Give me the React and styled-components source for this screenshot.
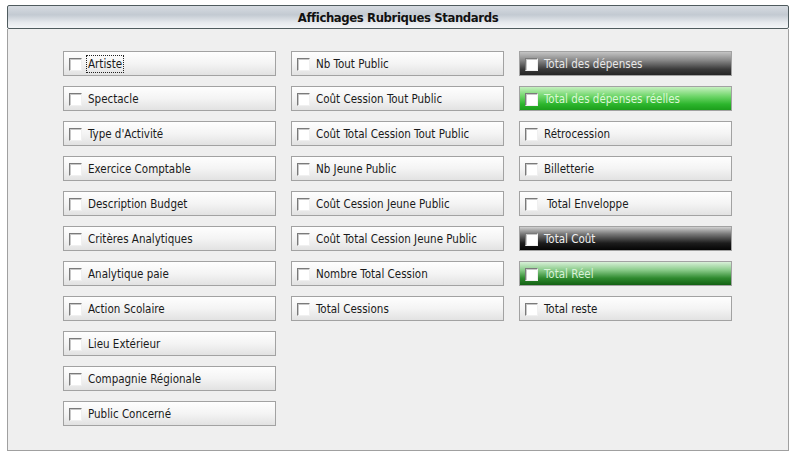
import styled, { createGlobalStyle, css } from "styled-components";

const GlobalStyle = createGlobalStyle`
  html, body {
    margin: 0;
    padding: 0;
    background: #ffffff;
    font-family: "DejaVu Sans Condensed", "DejaVu Sans", Tahoma, sans-serif;
  }
`;

const Page = styled.div`
  padding: 5px 9px 0 7px;
  width: 782px;
`;

const Panel = styled.div`
  display: flex;
  flex-direction: column;
`;

const Header = styled.div`
  height: 22px;
  border: 1px solid #4f5b5e;
  border-radius: 2px;
  background: linear-gradient(to bottom, #d6dbe1 0%, #c3cad2 40%, #e6e9ed 75%, #f3f5f7 100%);
  display: flex;
  align-items: center;
  justify-content: center;
  font-size: 13px;
  font-weight: bold;
  letter-spacing: -0.4px;
  color: #111;
`;

const Body = styled.div`
  background: #efefef;
  border: 1px solid #a0a0a0;
  border-top: none;
  padding: 22px 0 24px 55px;
  display: flex;
  gap: 15px;
  align-items: flex-start;
`;

const Column = styled.div`
  display: flex;
  flex-direction: column;
  gap: 10px;
  width: 213px;
`;

const variants = {
  light: css`
    background: linear-gradient(to bottom, #fefefe 0%, #f4f4f4 50%, #e2e2e2 100%);
    color: #1a1a1a;
  `,
  grey: css`
    background: linear-gradient(to bottom, #c4c4c4 0%, #8a8a8a 35%, #3a3a3a 75%, #252525 100%);
    color: #e8e8e8;
  `,
  black: css`
    background: linear-gradient(to bottom, #d0d0d0 0%, #7a7a7a 30%, #1c1c1c 70%, #050505 100%);
    color: #f0f0f0;
  `,
  green: css`
    background: linear-gradient(to bottom, #c6f0c0 0%, #6fd66a 40%, #2cb52c 75%, #1c9e1c 100%);
    color: #dcf8d6;
  `,
  darkgreen: css`
    background: linear-gradient(to bottom, #d8f0d8 0%, #8acb8a 35%, #2f8a2f 70%, #136113 100%);
    color: #d8f2d8;
  `,
};

const Option = styled.label`
  box-sizing: border-box;
  height: 25px;
  border: 1px solid #a2a2a2;
  display: flex;
  align-items: center;
  padding: 1px 0 0 5px;
  font-size: 11.5px;
  cursor: pointer;
  ${(p) => variants[p.$variant || "light"]}
`;

const Box = styled.span`
  box-sizing: border-box;
  width: 13px;
  height: 13px;
  background: #ffffff;
  border-top: 1px solid #7a7a7a;
  border-left: 1px solid #7a7a7a;
  border-right: 1px solid #f0f0f0;
  border-bottom: 1px solid #f0f0f0;
  box-shadow: inset 1px 1px 0 #c8c8c8;
  flex-shrink: 0;
  margin-right: ${(p) => (p.$wide ? 8 : 5)}px;
`;

const Text = styled.span`
  outline: ${(p) => (p.$focus ? "1px dotted #222" : "none")};
  outline-offset: 0;
  padding: 1px 1px;
  white-space: nowrap;
`;

const columns = [
  [
    { t: "Artiste", focus: true },
    { t: "Spectacle" },
    { t: "Type d'Activité" },
    { t: "Exercice Comptable" },
    { t: "Description Budget" },
    { t: "Critères Analytiques" },
    { t: "Analytique paie" },
    { t: "Action Scolaire" },
    { t: "Lieu Extérieur" },
    { t: "Compagnie Régionale" },
    { t: "Public Concerné" },
  ],
  [
    { t: "Nb Tout Public" },
    { t: "Coût Cession Tout Public" },
    { t: "Coût Total Cession Tout Public" },
    { t: "Nb Jeune Public" },
    { t: "Coût Cession Jeune Public" },
    { t: "Coût Total Cession Jeune Public" },
    { t: "Nombre Total Cession" },
    { t: "Total Cessions" },
  ],
  [
    { t: "Total des dépenses", v: "grey" },
    { t: "Total des dépenses réelles", v: "green" },
    { t: "Rétrocession" },
    { t: "Billetterie" },
    { t: "Total Enveloppe", wide: true },
    { t: "Total Coût", v: "black" },
    { t: "Total Réel", v: "darkgreen" },
    { t: "Total reste" },
  ],
];

export default function App() {
  return (
    <>
      <GlobalStyle />
      <Page>
        <Panel>
          <Header>Affichages Rubriques Standards</Header>
          <Body>
            {columns.map((col, i) => (
              <Column key={i}>
                {col.map((o) => (
                  <Option key={o.t} $variant={o.v}>
                    <Box $wide={o.wide} />
                    <Text $focus={o.focus}>{o.t}</Text>
                  </Option>
                ))}
              </Column>
            ))}
          </Body>
        </Panel>
      </Page>
    </>
  );
}
